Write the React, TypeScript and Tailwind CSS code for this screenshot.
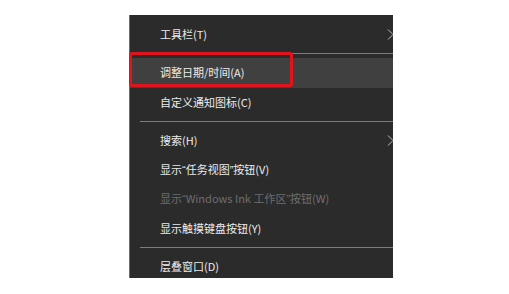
import React from "react";

type Item =
  | { kind: "item"; label: string; submenu?: boolean; disabled?: boolean; active?: boolean }
  | { kind: "sep" };

const items: Item[] = [
  { kind: "item", label: "工具栏(T)", submenu: true },
  { kind: "sep" },
  { kind: "item", label: "调整日期/时间(A)", active: true },
  { kind: "item", label: "自定义通知图标(C)" },
  { kind: "sep" },
  { kind: "item", label: "搜索(H)", submenu: true },
  { kind: "item", label: "显示“任务视图”按钮(V)" },
  { kind: "item", label: "显示“Windows Ink 工作区”按钮(W)", disabled: true },
  { kind: "item", label: "显示触摸键盘按钮(Y)" },
  { kind: "sep" },
  { kind: "item", label: "层叠窗口(D)" },
];

// curly quotes are half-width in the Windows menu font
function Label({ text }: { text: string }) {
  const parts = text.split(/([“”])/);
  return (
    <span className="leading-none">
      {parts.map((p, i) =>
        p === "“" || p === "”" ? (
          <span key={i} style={{ fontFamily: '"Liberation Sans", sans-serif' }}>
            {p}
          </span>
        ) : (
          <React.Fragment key={i}>{p}</React.Fragment>
        )
      )}
    </span>
  );
}

function Chevron() {
  return (
    <svg width="7" height="11" viewBox="0 0 7 11" className="shrink-0">
      <path d="M1 0.5 L6 5.5 L1 10.5" fill="none" stroke="#bdbdbd" strokeWidth="1" />
    </svg>
  );
}

export default function App() {
  return (
    <div
      className="relative h-[294px] w-[509px] overflow-hidden bg-white"
      style={{ fontFamily: '"Noto Sans CJK SC", "Noto Sans", sans-serif' }}
    >
      <div className="absolute left-[129px] top-[15px] h-[263px] w-[264px] overflow-hidden border-l border-[#6b6b6b] bg-[#2b2b2b] pt-[5px]">
        {items.map((item, i) =>
          item.kind === "sep" ? (
            <div key={i} className="flex h-[8.5px] items-center pl-[10px]">
              <div className="h-px w-full bg-[#7d7d7d]" />
            </div>
          ) : (
            <div
              key={i}
              className={`flex h-[29.5px] items-center justify-between pl-[30px] pr-0 text-[11px] ${
                item.active ? "bg-[#404040]" : ""
              } ${item.disabled ? "text-[#6e6e6e]" : "text-[#ececec]"}`}
            >
              <Label text={item.label} />
              {item.submenu && (
                <div className="-mr-[1px]">
                  <Chevron />
                </div>
              )}
            </div>
          )
        )}
      </div>
      <div className="absolute left-[129px] top-[52px] h-[35px] w-[164px] rounded-[3px] border-[3px] border-[#e0141c]" />
    </div>
  );
}
